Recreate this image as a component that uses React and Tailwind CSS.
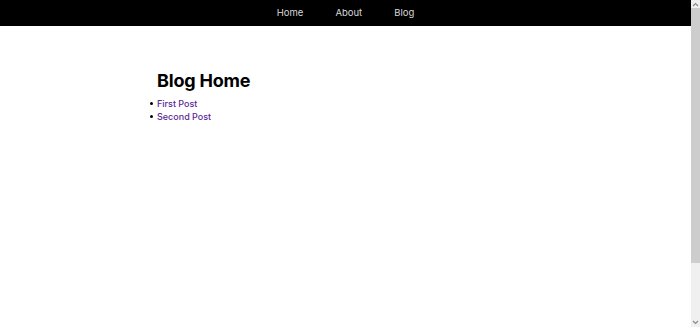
function Chevron({ up }) {
  return (
    <svg width="7" height="5" viewBox="0 0 7 5" className="block">
      <path
        d={up ? "M1 4 L3.5 1.5 L6 4" : "M1 1 L3.5 3.5 L6 1"}
        fill="none"
        stroke="#8a8a8a"
        strokeWidth="1.2"
      />
    </svg>
  );
}

export default function App() {
  return (
    <div
      className="flex h-screen bg-white"
      style={{ fontFamily: "Inter, 'Noto Sans', sans-serif" }}
    >
      <div className="flex-1">
        <nav className="flex h-[26px] items-center justify-center gap-[32px] bg-black text-[9.5px] text-[#d8d8d8]">
          <a href="#">Home</a>
          <a href="#">About</a>
          <a href="#">Blog</a>
        </nav>
        <main className="pl-[157px] pt-[44px]">
          <h1 className="m-0 text-[18px] font-bold leading-[22px] tracking-[-0.2px] text-black">
            Blog Home
          </h1>
          <ul className="mt-[5px] text-[9px] font-medium leading-[13px] text-[#5a2a96]">
            {["First Post", "Second Post"].map((t) => (
              <li key={t} className="-ml-[7px] flex items-center gap-[4px]">
                <span className="h-[3px] w-[3px] rounded-full bg-black" />
                <a href="#">{t}</a>
              </li>
            ))}
          </ul>
        </main>
      </div>
      <div className="flex w-[9px] flex-col items-center bg-[#f0f0f0]">
        <div className="flex h-[8px] items-center justify-center">
          <Chevron up />
        </div>
        <div className="h-[255px] w-full bg-[#cdcdcd]" />
        <div className="flex-1" />
        <div className="flex h-[9px] items-center justify-center">
          <Chevron />
        </div>
      </div>
    </div>
  );
}
